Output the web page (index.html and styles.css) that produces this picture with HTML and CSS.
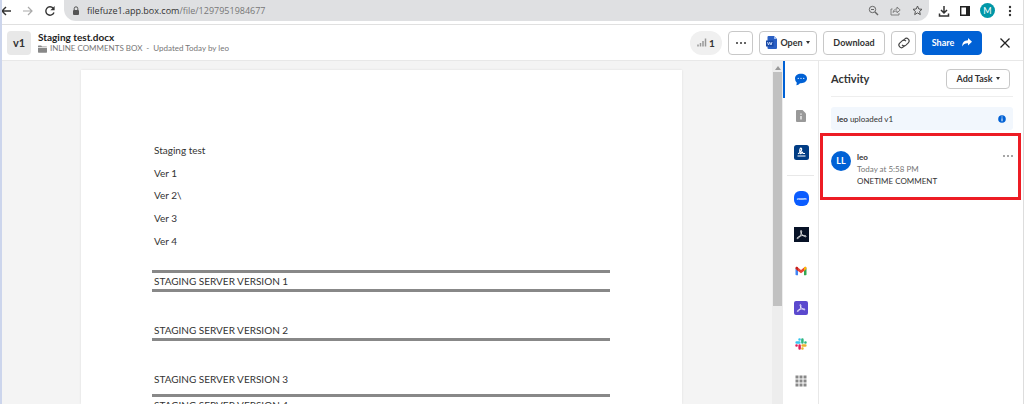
FILE: index.html
```html
<!DOCTYPE html>
<html lang="en">
<head>
    <meta charset="UTF-8">
    <meta name="viewport" content="width=device-width, initial-scale=1.0">
    <title>Staging test.docx | Box</title>
    <link rel="stylesheet" href="styles.css">
</head>
<body>
<div class="window">

    <!-- Browser toolbar -->
    <div class="browser-bar">
        <div class="nav-buttons">
            <button class="icon-btn" aria-label="Back"><svg width="12" height="12" viewBox="0 0 12 12"><path d="M11 6H2M6 2L2 6l4 4" fill="none" stroke="#333" stroke-width="1.4"/></svg></button>
            <button class="icon-btn" aria-label="Forward"><svg width="12" height="12" viewBox="0 0 12 12"><path d="M1 6h9M6 2l4 4-4 4" fill="none" stroke="#aaa" stroke-width="1.2"/></svg></button>
            <button class="icon-btn" aria-label="Reload"><svg width="12" height="12" viewBox="0 0 12 12"><path d="M10 7.4A4.2 4.2 0 1 1 9.2 3.2" fill="none" stroke="#333" stroke-width="1.4"/><path d="M10.6 1v4.2H6.4z" fill="#333"/></svg></button>
        </div>
        <div class="address">
            <svg width="8" height="10" viewBox="0 0 8 10"><rect x="1" y="4" width="6" height="5" rx="1" fill="#555"/><path d="M2.2 4V2.6a1.8 1.8 0 0 1 3.6 0V4" fill="none" stroke="#555"/></svg>
            <span class="url">filefuze1.app.box.com<span class="path">/file/1297951984677</span></span>
            <button class="icon-btn" aria-label="Zoom"><svg width="11" height="11" viewBox="0 0 11 11"><g fill="none" stroke="#666"><circle cx="4.5" cy="4.5" r="3.2"/><path d="M7 7l3 3" stroke-width="1.4"/><path d="M3 4.500h3"/></g></svg></button>
            <button class="icon-btn" aria-label="Share page"><svg width="11" height="11" viewBox="0 0 11 11"><path d="M2.500 4H1v6h8V8M3 7.500c.4-2.500 2-3.500 4-3.500V2l3.200 3L7 7.800V6C5.200 6 4 6.500 3 7.500z" fill="none" stroke="#777" stroke-width=".9"/></svg></button>
            <button class="icon-btn" aria-label="Bookmark"><svg width="11" height="11" viewBox="0 0 11 11"><path d="M5.500 1l1.300 3 3.200.3-2.400 2.100.7 3.200-2.800-1.700-2.800 1.700.7-3.200L1 4.300 4.200 4z" fill="none" stroke="#555"/></svg></button>
        </div>
        <div class="browser-tools">
            <button class="icon-btn" aria-label="Downloads"><svg width="12" height="12" viewBox="0 0 12 12"><path d="M6 1v6.500M3 5l3 3 3-3M1.500 8.500V11h9V8.500" fill="none" stroke="#333" stroke-width="1.5"/></svg></button>
            <button class="icon-btn" aria-label="Side panel"><svg width="12" height="12" viewBox="0 0 12 12"><path d="M1.700 1.700h8.600v8.600H1.700z" fill="none" stroke="#222" stroke-width="1.400"/><path d="M7 1h4v10H7z" fill="#222"/></svg></button>
            <button class="profile">M</button>
            <button class="icon-btn" aria-label="Menu"><svg width="12" height="12" viewBox="0 0 12 12"><g fill="#333"><circle cx="6" cy="2" r="1.200"/><circle cx="6" cy="6" r="1.200"/><circle cx="6" cy="10" r="1.200"/></g></svg></button>
        </div>
    </div>

    <!-- File header -->
    <header class="file-header">
        <div class="version">v1</div>
        <div class="file-info">
            <h1>Staging test.docx</h1>
            <p>
                <svg width="9" height="8" viewBox="0 0 9 8"><path d="M0 1q0-.6.6-.6h2.600l.8 1h4.400q.6 0 .6.6H0zM0 2.700h9v4.400q0 .6-.6.6H.6q-.6 0-.6-.6z" fill="#888"/></svg>
                <span>INLINE COMMENTS BOX</span><span class="dash">-</span><span>Updated Today by leo</span>
            </p>
        </div>
        <div class="actions">
            <button class="stats"><svg width="10" height="9" viewBox="0 0 10 9"><path d="M1 6.500v2M3.500 5v3.500M6 3v5.500M8.500.5v8" stroke="#999" stroke-width="1.500"/></svg>1</button>
            <button class="btn square" aria-label="More options"><svg width="12" height="4" viewBox="0 0 12 4"><g fill="#333"><circle cx="2" cy="2" r="1"/><circle cx="6" cy="2" r="1"/><circle cx="10" cy="2" r="1"/></g></svg></button>
            <button class="btn open">
                <svg width="11" height="13" viewBox="0 0 11 13"><path d="M2.500 0H8l3 3v9q0 1-1 1H2.500q-1 0-1-1V1q0-1 1-1z" fill="#2a5fc4"/><path d="M8 0l3 3H8z" fill="#9dbcf0"/><path d="M0 4.500h7.500v6H0z" fill="#1748a5"/><path d="M1.500 6l1 3 1.200-2.800L5 9l1-3" fill="none" stroke="#d4e2ff" stroke-width=".9"/></svg>
                Open<span class="caret"></span>
            </button>
            <button class="btn download">Download</button>
            <button class="btn square" aria-label="Copy link"><svg width="14" height="14" viewBox="0 0 14 14"><g transform="rotate(-45 7 7)" fill="none" stroke="#444" stroke-width="1.100"><path d="M5.500 9.300H3.800a2.600 2.600 0 0 1 0-5.200h3.400a2.600 2.600 0 0 1 2.500 3"/><path d="M8.500 4.700h1.700a2.600 2.600 0 0 1 0 5.200H6.800a2.600 2.600 0 0 1-2.500-3"/></g></svg></button>
            <button class="btn share">Share <svg width="10" height="9" viewBox="0 0 10 9"><path d="M6 0l4 3.700-4 3.800V5.200C3.300 5 1.500 6 .3 8.500 0 5 2 2.300 6 2.200z" fill="#fff"/></svg></button>
            <button class="icon-btn close" aria-label="Close"><svg width="12" height="12" viewBox="0 0 12 12"><path d="M1.500 1.500l9 9M10.500 1.500l-9 9" stroke="#222" stroke-width="1.300"/></svg></button>
        </div>
    </header>

    <main class="content">
        <!-- Document preview -->
        <section class="viewer">
            <article class="page">
                <div class="intro">
                    <p>Staging test</p>
                    <p>Ver 1</p>
                    <p>Ver 2\</p>
                    <p>Ver 3</p>
                    <p>Ver 4</p>
                </div>
                <div class="section ruled">STAGING SERVER VERSION 1</div>
                <div class="section">STAGING SERVER VERSION 2</div>
                <div class="section last">STAGING SERVER VERSION 3</div>
                <div class="section end">STAGING SERVER VERSION 4</div>
            </article>
            <div class="scrollbar">
                <svg width="6" height="4" viewBox="0 0 6 4"><path d="M3 0l3 4H0z" fill="#999"/></svg>
                <div class="thumb"></div>
            </div>
        </section>

        <!-- Sidebar tabs -->
        <nav class="rail">
            <div class="tabs">
                <button class="tab active" aria-label="Activity"><svg width="14" height="13" viewBox="0 0 14 13"><path d="M7 .8c3.500 0 6 2 6 4.700s-2.500 4.700-6 4.700H6Q4.500 12 2.300 12.200q.5-1 .4-2.700Q1 8 1 5.500C1 2.800 3.500.8 7 .8z" fill="#0061d5"/><g fill="#cfe2fb"><circle cx="4.300" cy="5.400" r=".7"/><circle cx="7" cy="5.400" r=".7"/><circle cx="9.700" cy="5.400" r=".7"/></g></svg></button>
                <button class="tab" aria-label="Details"><svg width="12" height="14" viewBox="0 0 12 14"><path d="M2 1h5.500L11 4.500V12q0 1-1 1H2q-1 0-1-1V2q0-1 1-1z" fill="#999"/><path d="M6 4.500v1.300M6 7v3.500" stroke="#fff" stroke-width="1.200"/></svg></button>
                <button class="tab" aria-label="Sign"><svg width="15" height="15" viewBox="0 0 15 15"><rect width="15" height="15" rx="2.500" fill="#003c84"/><path d="M4 8.800c3-1 4.600-5.500 3-5.700-1.700-.1-1.500 5.300-.5 5.600 1 .2 1-1.500 1.700-1.500s.3 1.300 1 1.300H11M3.500 11h8" fill="none" stroke="#fff" stroke-width="1.200"/></svg></button>
            </div>
            <hr>
            <div class="tabs apps">
                <button class="tab" aria-label="Zoom"><svg width="15" height="15" viewBox="0 0 15 15"><rect width="15" height="15" rx="6" fill="#0b5cff"/><text x="7.500" y="9" class="zoom-label">zoom</text></svg></button>
                <button class="tab" aria-label="Adobe Acrobat"><svg width="15" height="15" viewBox="0 0 15 15"><path d="M0 0h15v15H0z" fill="#071226"/><path d="M7 3.500c1.200 0 .6 2.500-.4 4.500-1 2.200-2.800 4.200-3.400 3.500-.7-.9 2-2.400 4.800-2.900 2.200-.4 4.500-.1 4.100.9-.4.900-3.500-.7-4.700-2.700C6.500 5.200 6.300 3.500 7 3.500z" fill="none" stroke="#eee" stroke-width=".9"/></svg></button>
                <button class="tab" aria-label="Gmail"><svg width="12" height="10" viewBox="0 0 12 10"><path d="M.5 2.500v6q0 .8.800.8H3V4z" fill="#4285f4"/><path d="M11.500 2.500v6q0 .8-.8.8H9V4z" fill="#34a853"/><path d="M.5 2.600Q.5.500 2 .8L6 4l4-3.200q1.500-.3 1.500 1.800L9 5 6 7.200 3 5z" fill="#ea4335"/><path d="M9 1.600l1-.8q1.500-.3 1.500 1.800L9 5z" fill="#fbbc04"/><path d="M.5 2.600Q.5.500 2 .8l1 .8V5z" fill="#c5221f"/></svg></button>
                <button class="tab" aria-label="Adobe Sign"><svg width="14" height="14" viewBox="0 0 14 14"><rect width="14" height="14" rx="2" fill="#5b49ce"/><path d="M6.300 3.500c1 0 .8 2.200 0 3.900-.8 1.900-2.300 3.500-2.900 3-.6-.8 1.800-2 4-2.400 2-.4 3.900-.1 3.600.7-.4.700-2.900-.6-4-2.300C6.100 5 5.700 3.500 6.300 3.500z" fill="none" stroke="#fff" stroke-width=".8"/></svg></button>
                <button class="tab" aria-label="Slack"><svg width="12" height="12" viewBox="0 0 12 12"><g fill="none" stroke-width="2.500" stroke-linecap="round"><path d="M1.600 4.600h2.800M4.500 1.500h.1" stroke="#36c5f0"/><path d="M7.400 1.600v2.800M10.400 4.500h.1" stroke="#2eb67d"/><path d="M7.600 7.400h2.800M7.400 10.400h.1" stroke="#ecb22e"/><path d="M4.600 7.600v2.800M1.500 7.400h.1" stroke="#e01e5a"/></g></svg></button>
                <button class="tab" aria-label="All apps"><svg width="12" height="12" viewBox="0 0 12 12"><path d="M.5 2h11M.5 6h11M.5 10h11" stroke="#888" stroke-width="3" stroke-dasharray="3 1"/></svg></button>
            </div>
        </nav>

        <!-- Activity panel -->
        <aside class="sidebar">
            <div class="sidebar-header">
                <h2>Activity</h2>
                <button class="btn add-task">Add Task<span class="caret"></span></button>
            </div>
            <div class="upload-note">
                <span><b>leo</b> uploaded v1</span>
                <svg width="8" height="8" viewBox="0 0 8 8"><circle cx="4" cy="4" r="3.800" fill="#0061d5"/><path d="M4 1.500v1M4 3.300v3" stroke="#fff"/></svg>
            </div>
            <div class="comment">
                <div class="avatar">LL</div>
                <div class="comment-body">
                    <div class="author">leo</div>
                    <div class="time">Today at 5:58 PM</div>
                    <div class="message">ONETIME COMMENT</div>
                </div>
                <button class="icon-btn more" aria-label="Comment options"><svg width="12" height="4" viewBox="0 0 12 4"><g fill="#888"><circle cx="2" cy="2" r="1"/><circle cx="6" cy="2" r="1"/><circle cx="10" cy="2" r="1"/></g></svg></button>
            </div>
        </aside>
    </main>
</div>
</body>
</html>
```

FILE: styles.css
```css
* {
    box-sizing: border-box;
}
body {
    margin: 0;
    font-family: Lato, sans-serif;
    font-size: 8px;
    color: #333;
    background: #fff;
}
h1, h2, p {
    margin: 0;
}
svg {
    display: block;
    flex: none;
}
button {
    font: inherit;
    color: inherit;
    padding: 0;
    border: none;
    background: none;
}
.icon-btn {
    display: flex;
}
.window {
    display: flex;
    flex-direction: column;
    height: 100vh;
    overflow: hidden;
    border-left: 2px solid #ccd5ec;
    border-right: 1px solid #ddd;
}

/* Browser toolbar */
.browser-bar {
    display: flex;
    flex: none;
    height: 25px;
    padding-bottom: 3px;
    border-bottom: 1px solid #e0e0e0;
}
.nav-buttons {
    display: flex;
    align-items: center;
    gap: 10px;
    width: 62px;
    margin-left: -2px;
}
.address {
    display: flex;
    flex: 1;
    align-items: center;
    gap: 11px;
    margin-left: 2px;
    padding: 0 6px 0 8px;
    border-radius: 0 0 12px 12px;
    background: #dfe0e2;
}
.url {
    flex: 1;
    margin-left: -4px;
    font-family: "Open Sans", sans-serif;
    font-size: 9px;
}
.path {
    color: #777;
}
.browser-tools {
    display: flex;
    align-items: center;
    gap: 9px;
    padding: 0 7px 0 9px;
}
.profile {
    width: 15px;
    height: 15px;
    border-radius: 50%;
    background: #0097a7;
    color: #fff;
    font-size: 9px;
}

/* File header */
.file-header {
    display: flex;
    flex: none;
    align-items: center;
    height: 36px;
    padding: 0 12px 0 5px;
    border-bottom: 1px solid #e8e8e8;
}
.version {
    width: 24px;
    height: 24px;
    border-radius: 4px;
    background: #e8e8e8;
    font-size: 11px;
    font-weight: bold;
    line-height: 23px;
    text-align: center;
}
.file-info {
    flex: 1;
    margin-left: 7px;
}
.file-info h1 {
    font-size: 10px;
    line-height: 12px;
    color: #222;
}
.file-info p {
    display: flex;
    align-items: center;
    gap: 3px;
    line-height: 11px;
    color: #767676;
}
.dash {
    margin: 0 1px;
}
.actions {
    display: flex;
    align-items: center;
    gap: 6px;
    font-weight: bold;
}
.btn {
    display: flex;
    align-items: center;
    justify-content: center;
    height: 24px;
    border: 1px solid #c8c8c8;
    border-radius: 4px;
    background: #fff;
    font-size: 9px;
    font-weight: bold;
}
.square {
    width: 25px;
}
.stats {
    display: flex;
    align-items: center;
    justify-content: center;
    gap: 2px;
    width: 32px;
    height: 24px;
    border-radius: 12px;
    background: #f0f0f0;
    font-size: 10px;
}
.open {
    gap: 3px;
    width: 58px;
}
.caret {
    border: 2px solid transparent;
    border-top: 3px solid #333;
    border-bottom: 0;
}
.download {
    width: 62px;
}
.share {
    gap: 8px;
    width: 60px;
    border-color: #0061d5;
    background: #0061d5;
    color: #fff;
}
.close {
    margin-left: 11px;
}

/* Main area */
.content {
    display: flex;
    flex: 1;
    min-height: 0;
}
.viewer {
    display: flex;
    flex: 1;
    background: #f4f4f4;
}
.page {
    flex: 1;
    margin: 9px 90px 0 79px;
    padding: 69px 72px 0 71px;
    overflow: hidden;
    background: #fff;
    box-shadow: 0 0 2px #ddd;
    font-size: 10px;
}
.intro {
    display: grid;
    align-items: center;
    height: 113px;
    padding-left: 2px;
}
.section {
    margin-bottom: 30px;
    padding-left: 2px;
    border-bottom: 3px solid #888;
    line-height: 16px;
}
.ruled {
    margin-top: 18px;
    border-top: 3px solid #888;
}
.last {
    margin-bottom: 0;
    padding-bottom: 7px;
}
.end {
    border: none;
}
.scrollbar {
    display: flex;
    flex-direction: column;
    align-items: center;
    width: 11px;
    padding-top: 5px;
    background: #ededed;
}
.thumb {
    width: 9px;
    height: 234px;
    margin-top: 2px;
    background: #c1c1c1;
}
.rail {
    width: 36px;
    border-right: 1px solid #e8e8e8;
}
.tabs {
    display: grid;
    grid-auto-rows: 1fr;
    height: 110px;
}
.apps {
    height: 219px;
}
.tab {
    display: flex;
    align-items: center;
    justify-content: center;
    padding-right: 1px;
    border-left: 2px solid transparent;
}
.active {
    border-color: #0061d5;
}
.rail hr {
    margin: 4px 4px;
    border: none;
    border-top: 1px solid #e8e8e8;
}
.zoom-label {
    fill: #fff;
    font-size: 4px;
    font-weight: bold;
    text-anchor: middle;
}

/* Activity panel */
.sidebar {
    width: 204px;
}
.sidebar-header {
    display: flex;
    align-items: center;
    justify-content: space-between;
    height: 36px;
    margin: 0 10px 10px 12px;
    padding-right: 3px;
    border-bottom: 1px solid #eee;
}
.sidebar-header h2 {
    font-size: 11px;
}
.add-task {
    gap: 3px;
    width: 64px;
    height: 20px;
}
.upload-note {
    display: flex;
    align-items: center;
    justify-content: space-between;
    height: 23px;
    margin: 0 10px 3px 12px;
    padding: 0 7px 0 6px;
    border-radius: 3px;
    background: #f2f7fd;
}
.comment {
    display: flex;
    height: 67px;
    margin: 0 2px 0 1px;
    padding: 15px 4px 0 8px;
    border: 3px solid #ed1c24;
}
.avatar {
    width: 20px;
    height: 20px;
    border-radius: 50%;
    background: #0061d5;
    color: #fff;
    font-size: 9px;
    font-weight: bold;
    line-height: 20px;
    text-align: center;
}
.comment-body {
    flex: 1;
    margin-left: 6px;
    line-height: 12px;
}
.author {
    font-weight: bold;
}
.time {
    color: #767676;
}
.more {
    align-self: flex-start;
    margin-top: 3px;
}
```
